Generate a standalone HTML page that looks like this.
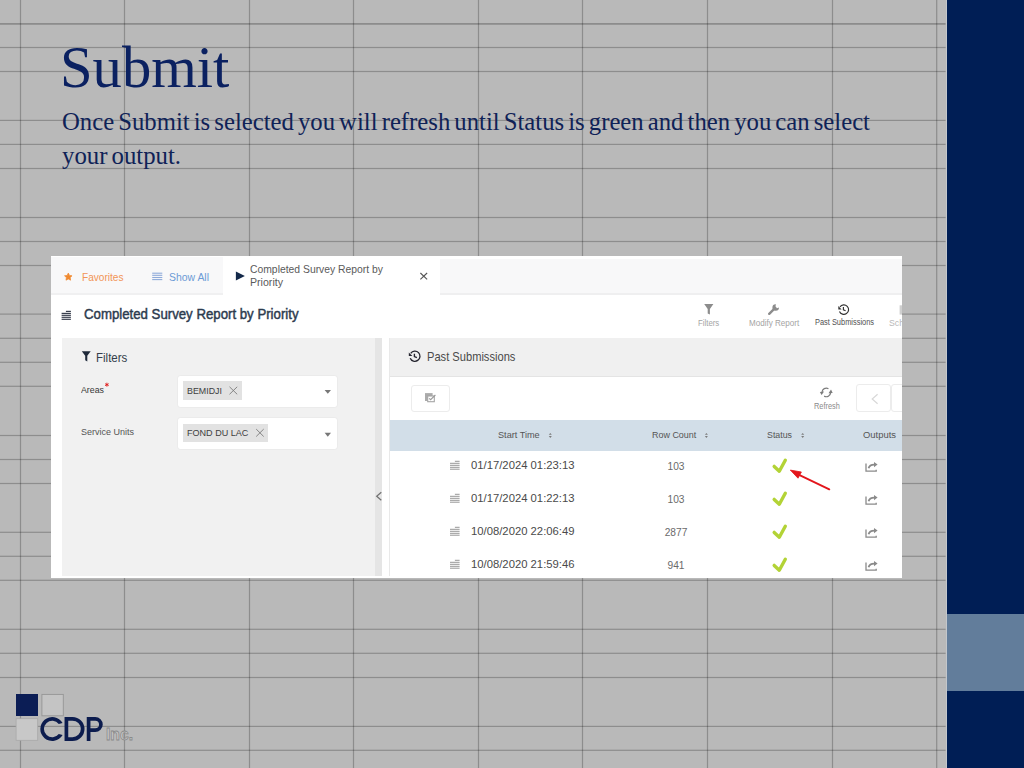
<!DOCTYPE html>
<html><head><meta charset="utf-8"><title>Submit</title>
<style>
html,body{margin:0;padding:0;}
body{width:1024px;height:768px;overflow:hidden;position:relative;background:#b9b9b9;font-family:"Liberation Sans",sans-serif;}
.a{position:absolute;}
.t{position:absolute;white-space:nowrap;line-height:1;transform-origin:0 0;}
</style></head><body>
<svg class="a" width="1024" height="768" viewBox="0 0 1024 768" style="left:0;top:0">
<rect x="0" y="23.05" width="945.6" height="1.7" fill="#000" fill-opacity="0.25"/>
<rect x="0" y="46.90" width="945.6" height="1.2" fill="#000" fill-opacity="0.235"/>
<rect x="0" y="70.90" width="945.6" height="1.2" fill="#000" fill-opacity="0.235"/>
<rect x="0" y="119.80" width="945.6" height="1.2" fill="#000" fill-opacity="0.235"/>
<rect x="0" y="143.80" width="945.6" height="1.2" fill="#000" fill-opacity="0.235"/>
<rect x="0" y="167.90" width="945.6" height="1.2" fill="#000" fill-opacity="0.235"/>
<rect x="0" y="216.90" width="945.6" height="1.2" fill="#000" fill-opacity="0.235"/>
<rect x="0" y="240.90" width="945.6" height="1.2" fill="#000" fill-opacity="0.235"/>
<rect x="0" y="264.90" width="945.6" height="1.2" fill="#000" fill-opacity="0.235"/>
<rect x="0" y="313.50" width="945.6" height="1.2" fill="#000" fill-opacity="0.235"/>
<rect x="0" y="337.70" width="945.6" height="1.2" fill="#000" fill-opacity="0.235"/>
<rect x="0" y="361.70" width="945.6" height="1.2" fill="#000" fill-opacity="0.235"/>
<rect x="0" y="385.70" width="945.6" height="1.2" fill="#000" fill-opacity="0.235"/>
<rect x="0" y="434.90" width="945.6" height="1.2" fill="#000" fill-opacity="0.235"/>
<rect x="0" y="458.90" width="945.6" height="1.2" fill="#000" fill-opacity="0.235"/>
<rect x="0" y="482.90" width="945.6" height="1.2" fill="#000" fill-opacity="0.235"/>
<rect x="0" y="531.70" width="945.6" height="1.2" fill="#000" fill-opacity="0.235"/>
<rect x="0" y="555.70" width="945.6" height="1.2" fill="#000" fill-opacity="0.235"/>
<rect x="0" y="579.70" width="945.6" height="1.2" fill="#000" fill-opacity="0.235"/>
<rect x="0" y="628.70" width="945.6" height="1.2" fill="#000" fill-opacity="0.235"/>
<rect x="0" y="652.70" width="945.6" height="1.2" fill="#000" fill-opacity="0.235"/>
<rect x="0" y="676.90" width="945.6" height="1.2" fill="#000" fill-opacity="0.235"/>
<rect x="0" y="725.80" width="945.6" height="1.2" fill="#000" fill-opacity="0.235"/>
<rect x="0" y="749.70" width="945.6" height="1.2" fill="#000" fill-opacity="0.235"/>
<rect x="19.90" y="0" width="1.2" height="768" fill="#000" fill-opacity="0.235"/>
<rect x="123.90" y="0" width="1.2" height="768" fill="#000" fill-opacity="0.235"/>
<rect x="248.90" y="0" width="1.2" height="768" fill="#000" fill-opacity="0.235"/>
<rect x="352.90" y="0" width="1.2" height="768" fill="#000" fill-opacity="0.235"/>
<rect x="477.90" y="0" width="1.2" height="768" fill="#000" fill-opacity="0.235"/>
<rect x="581.90" y="0" width="1.2" height="768" fill="#000" fill-opacity="0.235"/>
<rect x="706.90" y="0" width="1.2" height="768" fill="#000" fill-opacity="0.235"/>
<rect x="831.90" y="0" width="1.2" height="768" fill="#000" fill-opacity="0.235"/>
<rect x="936.10" y="0" width="1.2" height="768" fill="#000" fill-opacity="0.235"/>
</svg>
<div class="a" style="left:945.6px;top:0;width:1.6px;height:768px;background:#c3c7cc"></div>
<div class="a" style="left:947px;top:0;width:77px;height:768px;background:#001e55"></div>
<div class="a" style="left:947px;top:614px;width:77px;height:77px;background:#627d9b"></div>
<svg class="a" width="1024" height="768" viewBox="0 0 1024 768" style="left:0;top:0">
<rect x="16" y="694" width="22" height="22" fill="#0b1d55"/>
<rect x="41.9" y="694.4" width="21.4" height="21.4" fill="#c4c4c4" stroke="#959595" stroke-width="0.9"/>
<rect x="16.1" y="718.7" width="21.6" height="21.6" fill="#c8c8c8" stroke="#a9a9a9" stroke-width="0.8"/>
<g fill="none" stroke="#0c1c4e" stroke-width="3.7">

<path d="M 66.4 718.8 H 72.5 A 10.15 10.15 0 0 1 72.5 739.1 H 66.4 Z"/>
<path d="M 88.6 740.9 V 718.8 H 95.25 A 5.65 5.65 0 0 1 95.25 730.1 H 88.6"/>
</g>
<path fill="#0c1c4e" d="M62.60,723.03 A11.95,11.95 0 1 0 62.60,734.97 L58.79,734.11 A8.3,8.3 0 1 1 58.79,723.89 Z"/>
<text x="106" y="740.4" font-family="'Liberation Sans', sans-serif" font-weight="700" font-size="16.6" fill="#c6c6c6" stroke="#8a8a8a" stroke-width="0.8" textLength="27" lengthAdjust="spacingAndGlyphs">Inc.</text>
</svg>

<div class="t" style="left:59.60px;top:38.00px;font-family:'Liberation Serif', serif;font-size:59px;font-weight:400;color:#0b2161;transform:scaleX(0.9930);">Submit</div>
<div class="t" style="left:61.60px;top:109.00px;font-family:'Liberation Serif', serif;font-size:26px;font-weight:400;color:#0f2257;word-spacing:-2.2px;transform:scaleX(0.9505);">Once Submit is selected you will refresh until Status is green and then you can select</div>
<div class="t" style="left:61.60px;top:143.00px;font-family:'Liberation Serif', serif;font-size:26px;font-weight:400;color:#0f2257;word-spacing:-2.2px;transform:scaleX(0.9527);">your output.</div>
<div class="a" style="left:51px;top:256px;width:851px;height:322px;overflow:hidden;background:#fff">
<div class="a" style="left:-51px;top:-256px;width:1024px;height:768px">
  <!-- tab bar -->
  <div class="a" style="left:51px;top:256.6px;width:172.3px;height:36px;background:#f8f8f9"></div>
  <div class="a" style="left:51px;top:292.6px;width:172.3px;height:2.4px;background:#f0f0f1"></div>
  <div class="a" style="left:440px;top:259.4px;width:462px;height:33.2px;background:#f8f8f9"></div>
  <div class="a" style="left:440px;top:292.6px;width:462px;height:2.4px;background:#efeff0"></div>
  <!-- left panel -->
  <div class="a" style="left:61.5px;top:338.3px;width:313px;height:238.1px;background:#f1f1f1"></div>
  <div class="a" style="left:374.5px;top:338.3px;width:7.8px;height:238.1px;background:#e5e5e5"></div>
  <!-- inputs -->
  <div class="a" style="left:177.5px;top:375.9px;width:159.6px;height:30.7px;background:#fff;border-radius:2px;box-shadow:0 0 1.5px rgba(0,0,0,0.12)"></div>
  <div class="a" style="left:177.5px;top:418.1px;width:159.6px;height:30.7px;background:#fff;border-radius:2px;box-shadow:0 0 1.5px rgba(0,0,0,0.12)"></div>
  <div class="a" style="left:183.2px;top:381.2px;width:58.9px;height:18.6px;background:#e2e2e2"></div>
  <div class="a" style="left:183.0px;top:423.7px;width:84.9px;height:18.5px;background:#e2e2e2"></div>
  <!-- right panel -->
  <div class="a" style="left:388.6px;top:338.3px;width:1px;height:240px;background:#e9e9e9"></div>
  <div class="a" style="left:389.5px;top:338.4px;width:513px;height:38px;background:#f0f0f0"></div>
  <div class="a" style="left:389.5px;top:375.6px;width:513px;height:1px;background:#e4e4e4"></div>
  <div class="a" style="left:411.4px;top:385.1px;width:38.3px;height:26.5px;box-sizing:border-box;border:1px solid #ececec;border-radius:3px"></div>
  <div class="a" style="left:856.3px;top:384.3px;width:35.1px;height:27.9px;box-sizing:border-box;border:1px solid #ececec;border-radius:3px"></div>
  <div class="a" style="left:891.4px;top:384.3px;width:35px;height:27.9px;box-sizing:border-box;border:1px solid #ececec;border-radius:3px"></div>
  <div class="a" style="left:389.5px;top:420.3px;width:513px;height:30.4px;background:#d2dee8"></div>
  <div class="a" style="left:61.5px;top:576.4px;width:841px;height:2px;background:#fff"></div>
  <!-- icons -->
  <svg class="a" width="1024" height="768" viewBox="0 0 1024 768" style="left:0;top:0">
    <!-- star -->
    <path fill="#f08a30" stroke="#f08a30" stroke-width="0.7" stroke-linejoin="round" d="M68.30,273.05 L69.48,275.38 L72.06,275.78 L70.20,277.62 L70.62,280.20 L68.30,279.00 L65.98,280.20 L66.40,277.62 L64.54,275.78 L67.12,275.38 Z"/>
    <!-- show all lines -->
    <g stroke="#8fabda" stroke-width="1.1">
      <line x1="152.2" y1="273.2" x2="162.3" y2="273.2"/><line x1="152.2" y1="275.3" x2="162.3" y2="275.3"/>
      <line x1="152.2" y1="277.5" x2="162.3" y2="277.5"/><line x1="152.2" y1="279.6" x2="162.3" y2="279.6"/>
    </g>
    <!-- play -->
    <path fill="#14294a" d="M235.9,271.6 L244.9,276.05 L235.9,280.5 Z"/>
    <!-- close -->
    <g stroke="#555" stroke-width="1.1"><line x1="420.4" y1="273" x2="427.1" y2="279.3"/><line x1="427.1" y1="273" x2="420.4" y2="279.3"/></g>
    <!-- header list icon -->
    <g stroke="#383f4d" stroke-width="1.2">
      <line x1="65.9" y1="311.4" x2="70.9" y2="311.4"/>
      <line x1="61.6" y1="313.4" x2="70.9" y2="313.4"/><line x1="61.6" y1="315.3" x2="70.9" y2="315.3"/>
      <line x1="61.6" y1="317.3" x2="70.9" y2="317.3"/><line x1="61.6" y1="319.3" x2="70.9" y2="319.3"/>
    </g>
    <!-- toolbar filter -->
    <path fill="#8c8c8c" d="M704.2,304 H713.4 L709.9,309 V314.6 L707.7,313.4 V309 Z"/>
    <!-- wrench -->
    <g fill="#8c8c8c">
      <path d="M769.2,313.8 L775.2,307.8" stroke="#8c8c8c" stroke-width="2.4" stroke-linecap="round"/>
      <path d="M775.9,304.2 A3.3,3.3 0 1 0 779.0,307.6 L776.9,308.2 L775.4,306.9 Z"/>
    </g>
    <!-- history toolbar -->
    <g fill="none" stroke="#333" stroke-width="1.15">
      <path d="M839.48,311.46 A4.75,4.75 0 1 0 839.96,306.88"/>
      <path d="M843.4,307.1 V309.85 L845.6,310.8"/>
    </g>
    <path fill="#333" d="M838.3,306.1 L838.3,309.4 L841.6,309.4 Z"/>
    <!-- sch icon -->
    <rect x="899.6" y="305.3" width="3" height="9.3" fill="#cfcfcf"/>
    <!-- filter panel icon -->
    <path fill="#1f2a3a" d="M81.8,351.2 H90.7 L87.3,355.8 V361.5 L85.2,360.3 V355.8 Z"/>
    <!-- asterisk -->
    <g stroke="#e01b1b" stroke-width="0.9">
      <line x1="106.9" y1="382.7" x2="106.9" y2="386.7"/><line x1="105.1" y1="383.7" x2="108.7" y2="385.7"/><line x1="108.7" y1="383.7" x2="105.1" y2="385.7"/>
    </g>
    <!-- chip x -->
    <g stroke="#7a7a7a" stroke-width="0.9">
      <line x1="229.5" y1="386.8" x2="237.2" y2="394.3"/><line x1="237.2" y1="386.8" x2="229.5" y2="394.3"/>
      <line x1="256.2" y1="429.1" x2="263.7" y2="436.5"/><line x1="263.7" y1="429.1" x2="256.2" y2="436.5"/>
    </g>
    <!-- carets -->
    <path fill="#777" d="M324.6,389.9 H331 L327.8,393.8 Z"/>
    <path fill="#777" d="M324.6,432.8 H331 L327.8,436.7 Z"/>
    <!-- collapse chevron -->
    <path fill="none" stroke="#727272" stroke-width="1.25" d="M381.3,492.2 L376.7,496.2 L381.3,500.2"/>
    <!-- history panel -->
    <g fill="none" stroke="#262630" stroke-width="1.35">
      <path d="M410.21,358.19 A5.1,5.1 0 1 0 410.72,353.27"/>
      <path d="M414.4,353.7 V356.5 L416.9,357.7"/>
    </g>
    <path fill="#262630" d="M408.8,352.5 L408.8,356.1 L412.4,356.1 Z"/>
    <!-- multi-select icon -->
    <rect x="425.0" y="393.1" width="7.6" height="7.9" fill="#ababab"/>
    <rect x="427.7" y="396.0" width="6.6" height="5.7" fill="#fff" stroke="#a5a5a5" stroke-width="1.1"/>
    <path d="M429.2,398.3 L430.6,399.7 L435.4,395.0" fill="none" stroke="#9a9a9a" stroke-width="1.1"/>
    <!-- refresh -->
    <g fill="none" stroke="#7c7c7c" stroke-width="1.2">
      <path d="M828.45,388.68 A4.3,4.3 0 0 0 822.0,392.2"/>
      <path d="M824.15,396.12 A4.3,4.3 0 0 0 830.6,392.6"/>
    </g>
    <path fill="#7c7c7c" d="M819.9,391.9 L824.1,391.5 L821.6,395.0 Z"/>
    <path fill="#7c7c7c" d="M828.5,393.3 L832.7,392.9 L831.0,389.6 Z"/>
    <!-- pager chevron -->
    <path fill="none" stroke="#d8d8d8" stroke-width="1.2" d="M877.6,394.2 L872.2,399 L877.6,403.8"/>
    <!-- sort icons -->
    <g fill="#7b7b7b">
      <path d="M548.8,434.8 L550.3,432.9 L551.8,434.8 Z"/><path d="M548.8,436 L550.3,437.9 L551.8,436 Z"/>
      <path d="M704.9,434.8 L706.4,432.9 L707.9,434.8 Z"/><path d="M704.9,436 L706.4,437.9 L707.9,436 Z"/>
      <path d="M801.2,434.8 L802.7,432.9 L804.2,434.8 Z"/><path d="M801.2,436 L802.7,437.9 L804.2,436 Z"/>
    </g>
    <g transform="translate(0,0)">
<g stroke="#8a8a8a" stroke-width="0.9"><line x1="454.9" y1="461.3" x2="459.6" y2="461.3"/><line x1="450" y1="463.3" x2="459.6" y2="463.3"/><line x1="450" y1="465.3" x2="459.6" y2="465.3"/><line x1="450" y1="467.3" x2="459.6" y2="467.3"/><line x1="450" y1="469.2" x2="459.6" y2="469.2"/></g>
<path d="M774.2,466.4 L779.3,471.2 L785.3,460.3" fill="none" stroke="#b3d336" stroke-width="3.4" stroke-linecap="round" stroke-linejoin="round"/>
<path d="M866,463.6 V471.2 H876.2 V469.8" fill="none" stroke="#8a8a8a" stroke-width="1.3"/>
<path d="M868.6,468.2 C869.2,465.6 871.2,464.6 874.4,464.6" fill="none" stroke="#8a8a8a" stroke-width="1.8"/>
<path d="M874,462.0 L877.6,464.6 L874,467.2 Z" fill="#8a8a8a"/>
</g>
<g transform="translate(0,33)">
<g stroke="#8a8a8a" stroke-width="0.9"><line x1="454.9" y1="461.3" x2="459.6" y2="461.3"/><line x1="450" y1="463.3" x2="459.6" y2="463.3"/><line x1="450" y1="465.3" x2="459.6" y2="465.3"/><line x1="450" y1="467.3" x2="459.6" y2="467.3"/><line x1="450" y1="469.2" x2="459.6" y2="469.2"/></g>
<path d="M774.2,466.4 L779.3,471.2 L785.3,460.3" fill="none" stroke="#b3d336" stroke-width="3.4" stroke-linecap="round" stroke-linejoin="round"/>
<path d="M866,463.6 V471.2 H876.2 V469.8" fill="none" stroke="#8a8a8a" stroke-width="1.3"/>
<path d="M868.6,468.2 C869.2,465.6 871.2,464.6 874.4,464.6" fill="none" stroke="#8a8a8a" stroke-width="1.8"/>
<path d="M874,462.0 L877.6,464.6 L874,467.2 Z" fill="#8a8a8a"/>
</g>
<g transform="translate(0,66)">
<g stroke="#8a8a8a" stroke-width="0.9"><line x1="454.9" y1="461.3" x2="459.6" y2="461.3"/><line x1="450" y1="463.3" x2="459.6" y2="463.3"/><line x1="450" y1="465.3" x2="459.6" y2="465.3"/><line x1="450" y1="467.3" x2="459.6" y2="467.3"/><line x1="450" y1="469.2" x2="459.6" y2="469.2"/></g>
<path d="M774.2,466.4 L779.3,471.2 L785.3,460.3" fill="none" stroke="#b3d336" stroke-width="3.4" stroke-linecap="round" stroke-linejoin="round"/>
<path d="M866,463.6 V471.2 H876.2 V469.8" fill="none" stroke="#8a8a8a" stroke-width="1.3"/>
<path d="M868.6,468.2 C869.2,465.6 871.2,464.6 874.4,464.6" fill="none" stroke="#8a8a8a" stroke-width="1.8"/>
<path d="M874,462.0 L877.6,464.6 L874,467.2 Z" fill="#8a8a8a"/>
</g>
<g transform="translate(0,99)">
<g stroke="#8a8a8a" stroke-width="0.9"><line x1="454.9" y1="461.3" x2="459.6" y2="461.3"/><line x1="450" y1="463.3" x2="459.6" y2="463.3"/><line x1="450" y1="465.3" x2="459.6" y2="465.3"/><line x1="450" y1="467.3" x2="459.6" y2="467.3"/><line x1="450" y1="469.2" x2="459.6" y2="469.2"/></g>
<path d="M774.2,466.4 L779.3,471.2 L785.3,460.3" fill="none" stroke="#b3d336" stroke-width="3.4" stroke-linecap="round" stroke-linejoin="round"/>
<path d="M866,463.6 V471.2 H876.2 V469.8" fill="none" stroke="#8a8a8a" stroke-width="1.3"/>
<path d="M868.6,468.2 C869.2,465.6 871.2,464.6 874.4,464.6" fill="none" stroke="#8a8a8a" stroke-width="1.8"/>
<path d="M874,462.0 L877.6,464.6 L874,467.2 Z" fill="#8a8a8a"/>
</g>
    <!-- red arrow -->
    <line x1="797.5" y1="474.2" x2="829.3" y2="489.3" stroke="#e3161c" stroke-width="1.9" stroke-linecap="round"/>
    <path fill="#e3161c" stroke="#e3161c" stroke-width="0.8" stroke-linejoin="round" d="M790.3,470.1 L801.4,472.0 L798.0,478.2 Z"/>
  </svg>
  <div class="t" style="left:81.50px;top:272.00px;font-family:'Liberation Sans', sans-serif;font-size:11px;font-weight:400;color:#f29556;transform:scaleX(0.9171);">Favorites</div>
<div class="t" style="left:169.20px;top:272.00px;font-family:'Liberation Sans', sans-serif;font-size:11px;font-weight:400;color:#6c9bd6;transform:scaleX(0.9478);">Show All</div>
<div class="t" style="left:250.20px;top:264.00px;font-family:'Liberation Sans', sans-serif;font-size:11px;font-weight:400;color:#5a5a5a;transform:scaleX(0.9417);">Completed Survey Report by</div>
<div class="t" style="left:250.20px;top:277.00px;font-family:'Liberation Sans', sans-serif;font-size:11px;font-weight:400;color:#5a5a5a;transform:scaleX(0.9639);">Priority</div>
<div class="t" style="left:83.80px;top:307.00px;font-family:'Liberation Sans', sans-serif;font-size:14px;font-weight:400;color:#2c3b4e;-webkit-text-stroke:0.45px #2c3b4e;transform:scaleX(0.9441);">Completed Survey Report by Priority</div>
<div class="t" style="left:698.40px;top:319.00px;font-family:'Liberation Sans', sans-serif;font-size:8.7px;font-weight:400;color:#a4a4a4;transform:scaleX(0.8962);">Filters</div>
<div class="t" style="left:748.50px;top:319.00px;font-family:'Liberation Sans', sans-serif;font-size:8.7px;font-weight:400;color:#a4a4a4;transform:scaleX(0.9283);">Modify Report</div>
<div class="t" style="left:814.70px;top:318.00px;font-family:'Liberation Sans', sans-serif;font-size:8.7px;font-weight:400;color:#505050;transform:scaleX(0.8545);">Past Submissions</div>
<div class="t" style="left:889.00px;top:319.00px;font-family:'Liberation Sans', sans-serif;font-size:8.7px;font-weight:400;color:#b8b8b8;">Sch</div>
<div class="t" style="left:95.60px;top:352.00px;font-family:'Liberation Sans', sans-serif;font-size:12.5px;font-weight:400;color:#333d4a;transform:scaleX(0.9197);">Filters</div>
<div class="t" style="left:80.90px;top:386.00px;font-family:'Liberation Sans', sans-serif;font-size:9px;font-weight:400;color:#383838;transform:scaleX(0.9781);">Areas</div>
<div class="t" style="left:80.90px;top:428.00px;font-family:'Liberation Sans', sans-serif;font-size:9px;font-weight:400;color:#555555;transform:scaleX(0.9997);">Service Units</div>
<div class="t" style="left:186.70px;top:386.00px;font-family:'Liberation Sans', sans-serif;font-size:9.8px;font-weight:400;color:#404040;transform:scaleX(0.9054);">BEMIDJI</div>
<div class="t" style="left:186.90px;top:428.00px;font-family:'Liberation Sans', sans-serif;font-size:9.8px;font-weight:400;color:#404040;transform:scaleX(0.9244);">FOND DU LAC</div>
<div class="t" style="left:427.20px;top:350.00px;font-family:'Liberation Sans', sans-serif;font-size:13.3px;font-weight:400;color:#4a4a4a;transform:scaleX(0.8364);">Past Submissions</div>
<div class="t" style="left:813.60px;top:402.00px;font-family:'Liberation Sans', sans-serif;font-size:8.7px;font-weight:400;color:#8a8a8a;transform:scaleX(0.8481);">Refresh</div>
<div class="t" style="left:498.30px;top:430.00px;font-family:'Liberation Sans', sans-serif;font-size:9.6px;font-weight:400;color:#555555;transform:scaleX(0.9538);">Start Time</div>
<div class="t" style="left:651.70px;top:430.00px;font-family:'Liberation Sans', sans-serif;font-size:9.6px;font-weight:400;color:#555555;transform:scaleX(0.9332);">Row Count</div>
<div class="t" style="left:767.10px;top:430.00px;font-family:'Liberation Sans', sans-serif;font-size:9.6px;font-weight:400;color:#555555;transform:scaleX(0.9190);">Status</div>
<div class="t" style="left:863.40px;top:430.00px;font-family:'Liberation Sans', sans-serif;font-size:9.6px;font-weight:400;color:#555555;transform:scaleX(0.9819);">Outputs</div>
<div class="t" style="left:470.80px;top:460.00px;font-family:'Liberation Sans', sans-serif;font-size:11.4px;font-weight:400;color:#4a4a4a;transform:scaleX(0.9903);">01/17/2024 01:23:13</div>
<div class="t" style="left:667.50px;top:462.00px;font-family:'Liberation Sans', sans-serif;font-size:10.2px;font-weight:400;color:#6a6a6a;">103</div>
<div class="t" style="left:470.80px;top:493.00px;font-family:'Liberation Sans', sans-serif;font-size:11.4px;font-weight:400;color:#4a4a4a;transform:scaleX(0.9903);">01/17/2024 01:22:13</div>
<div class="t" style="left:667.50px;top:495.00px;font-family:'Liberation Sans', sans-serif;font-size:10.2px;font-weight:400;color:#6a6a6a;">103</div>
<div class="t" style="left:470.80px;top:526.00px;font-family:'Liberation Sans', sans-serif;font-size:11.4px;font-weight:400;color:#4a4a4a;transform:scaleX(0.9903);">10/08/2020 22:06:49</div>
<div class="t" style="left:664.66px;top:528.00px;font-family:'Liberation Sans', sans-serif;font-size:10.2px;font-weight:400;color:#6a6a6a;">2877</div>
<div class="t" style="left:470.80px;top:559.00px;font-family:'Liberation Sans', sans-serif;font-size:11.4px;font-weight:400;color:#4a4a4a;transform:scaleX(0.9903);">10/08/2020 21:59:46</div>
<div class="t" style="left:667.50px;top:561.00px;font-family:'Liberation Sans', sans-serif;font-size:10.2px;font-weight:400;color:#6a6a6a;">941</div>
</div>
</div>

</body></html>
